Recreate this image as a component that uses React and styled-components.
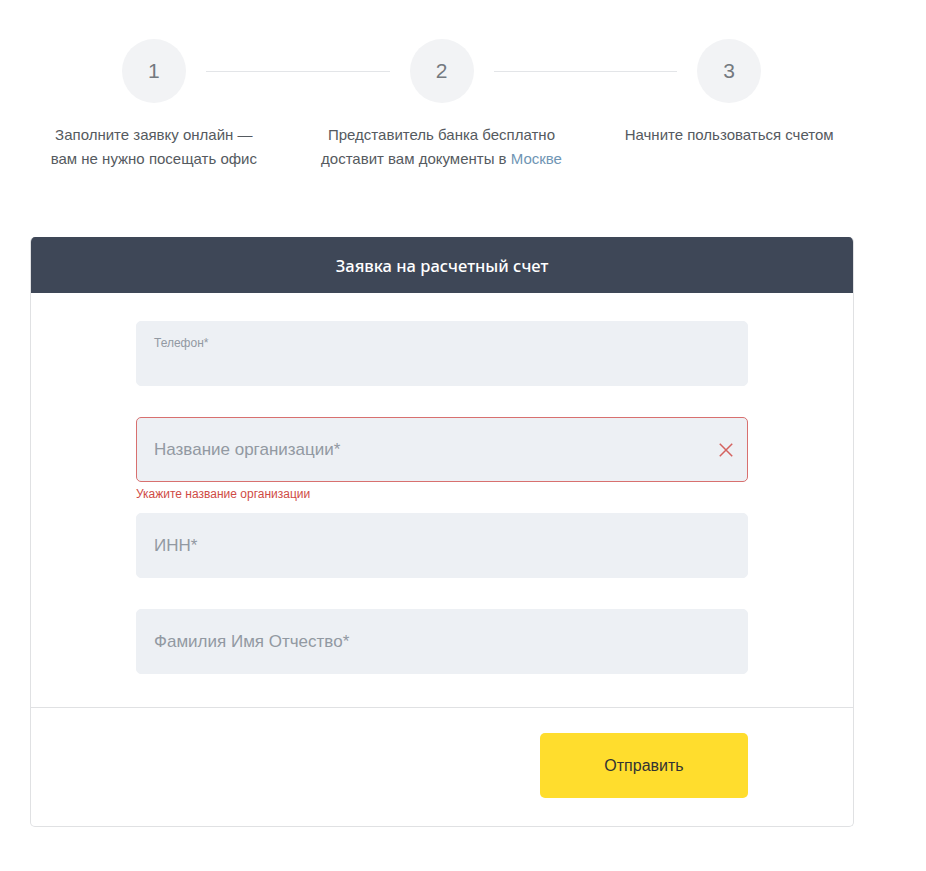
import React from "react";
import styled, { createGlobalStyle } from "styled-components";

const GlobalStyle = createGlobalStyle`
  body {
    margin: 0;
    background: #ffffff;
    font-family: "Liberation Sans", Arial, sans-serif;
  }
`;

const steps = [
  { num: 1, lines: ["Заполните заявку онлайн —", "вам не нужно посещать офис"] },
  { num: 2, lines: ["Представитель банка бесплатно", "доставит вам документы в "], link: "Москве" },
  { num: 3, lines: ["Начните пользоваться счетом"] },
];

function App() {
  return (
    <>
      <GlobalStyle />
      <Page>
        <Steps>
          {steps.map((s, i) => (
            <Step key={s.num}>
              <StepHead>
                <Line $hidden={i === 0} />
                <Circle>{s.num}</Circle>
                <Line $hidden={i === steps.length - 1} />
              </StepHead>
              <StepText>
                {s.lines[0]}
                {s.lines[1] && <br />}
                {s.lines[1]}
                {s.link && <CityLink>{s.link}</CityLink>}
              </StepText>
            </Step>
          ))}
        </Steps>

        <Card>
          <CardHeader>Заявка на расчетный счет</CardHeader>
          <CardBody>
            <Field>
              <InputBox>
                <SmallLabel>Телефон*</SmallLabel>
              </InputBox>
            </Field>
            <Field>
              <InputBox $error>
                <Input placeholder="Название организации*" />
                <ClearIcon viewBox="0 0 18 18">
                  <path d="M2 2 L16 16 M16 2 L2 16" />
                </ClearIcon>
              </InputBox>
              <ErrorText>Укажите название организации</ErrorText>
            </Field>
            <Field>
              <InputBox>
                <Input placeholder="ИНН*" />
              </InputBox>
            </Field>
            <Field $last>
              <InputBox>
                <Input placeholder="Фамилия Имя Отчество*" />
              </InputBox>
            </Field>
          </CardBody>
          <CardFooter>
            <SubmitButton>Отправить</SubmitButton>
          </CardFooter>
        </Card>
      </Page>
    </>
  );
}

const Page = styled.div`
  width: 863px;
  padding: 39px 0 44px 10px;
  display: flex;
  flex-direction: column;
  align-items: flex-start;
`;

const Steps = styled.div`
  width: 863px;
  display: grid;
  grid-template-columns: repeat(3, 1fr);
`;

const Step = styled.div`
  display: flex;
  flex-direction: column;
  align-items: center;
`;

const StepHead = styled.div`
  width: 100%;
  display: flex;
  align-items: center;
  gap: 20px;
`;

const Line = styled.div`
  flex: 1;
  height: 1px;
  background: ${(p) => (p.$hidden ? "transparent" : "#e3e5e8")};
`;

const Circle = styled.div`
  width: 64px;
  height: 64px;
  border-radius: 50%;
  background: #f2f3f5;
  color: #74797f;
  font-family: "Liberation Sans", Arial, sans-serif;
  font-size: 21px;
  display: flex;
  align-items: center;
  justify-content: center;
`;

const StepText = styled.div`
  margin-top: 20px;
  text-align: center;
  font-size: 15px;
  line-height: 24px;
  color: #555a60;
`;

const CityLink = styled.span`
  color: #6f95b4;
`;

const Card = styled.div`
  margin-top: 66px;
  margin-left: 20px;
  width: 824px;
  border: 1px solid #e0e1e3;
  border-top: none;
  border-radius: 5px;
  overflow: hidden;
  box-sizing: border-box;
`;

const CardHeader = styled.div`
  height: 56px;
  background: #3e4757;
  color: #ffffff;
  font-family: "Noto Sans", "Open Sans", sans-serif;
  font-weight: 500;
  font-size: 16.5px;
  display: flex;
  align-items: center;
  justify-content: center;
  margin: 0 -1px;
`;

const CardBody = styled.div`
  padding: 28px 105px 33px;
  border-bottom: 1px solid #e0e1e3;
  display: flex;
  flex-direction: column;
`;

const Field = styled.div`
  height: ${(p) => (p.$last ? "65px" : "96px")};
  display: flex;
  flex-direction: column;
`;

const InputBox = styled.div`
  position: relative;
  height: 65px;
  box-sizing: border-box;
  border-radius: 5px;
  background: #edf0f4;
  border: 1px solid ${(p) => (p.$error ? "#d8706f" : "#edf0f4")};
  display: flex;
  align-items: center;
  padding: 0 13px 0 17px;
`;

const SmallLabel = styled.div`
  position: absolute;
  top: 14px;
  left: 17px;
  font-size: 12px;
  color: #9299a2;
`;

const Input = styled.input`
  flex: 1;
  border: none;
  background: transparent;
  outline: none;
  font-family: "Liberation Sans", Arial, sans-serif;
  font-size: 17px;
  color: #333;
  padding: 0;

  &::placeholder {
    color: #9299a2;
  }
`;

const ClearIcon = styled.svg`
  width: 16px;
  height: 16px;
  fill: none;
  stroke: #d4625f;
  stroke-width: 1.7;
`;

const ErrorText = styled.div`
  margin-top: 5px;
  font-size: 12px;
  color: #cf4b45;
`;

const CardFooter = styled.div`
  padding: 25px 105px 28px;
  display: flex;
  justify-content: flex-end;
`;

const SubmitButton = styled.button`
  width: 208px;
  height: 65px;
  border: none;
  border-radius: 5px;
  background: #ffdd2d;
  color: #333333;
  font-family: "Liberation Sans", Arial, sans-serif;
  font-size: 16px;
  cursor: pointer;
`;

export default App;
